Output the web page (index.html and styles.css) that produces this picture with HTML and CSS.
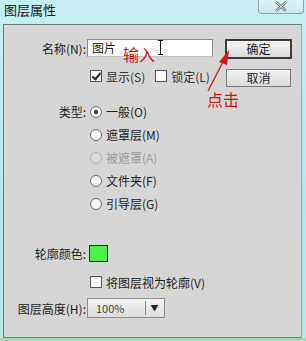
FILE: index.html
```html
<!DOCTYPE html>
<html>
<head>
<meta charset="utf-8">
<title>图层属性</title>
<link rel="stylesheet" href="styles.css">
</head>
<body>
<div class="window">
	<!--title bar-->
	<div class="titlebar">
		<span class="title">图层属性</span>
		<span class="close">
			<svg width="14" height="11" viewBox="0 0 14 11"><path d="M2 1 L12 10 M12 1 L2 10" stroke="#6b7376" stroke-width="2.6" fill="none"/><path d="M2 1 L12 10 M12 1 L2 10" stroke="#f4f6f6" stroke-width="1" fill="none"/></svg>
		</span>
	</div>
	<!--content-->
	<div class="panel">
		<div class="main">
			<div class="row row-name">
				<label class="lbl">名称(N):</label>
				<div class="input">图片</div>
			</div>
			<div class="row row-checks">
				<span class="chk on"></span><span class="txt">显示(S)</span>
				<span class="chk lock"></span><span class="txt">锁定(L)</span>
			</div>
			<div class="row radio-row first">
				<label class="lbl">类型:</label>
				<span class="radio on"></span><span class="txt">一般(O)</span>
			</div>
			<div class="row radio-row"><span class="radio"></span><span class="txt">遮罩层(M)</span></div>
			<div class="row radio-row off"><span class="radio"></span><span class="txt">被遮罩(A)</span></div>
			<div class="row radio-row"><span class="radio"></span><span class="txt">文件夹(F)</span></div>
			<div class="row radio-row"><span class="radio"></span><span class="txt">引导层(G)</span></div>
			<div class="row row-color">
				<label class="lbl">轮廓颜色:</label>
				<span class="swatch"></span>
			</div>
			<div class="row row-outline">
				<span class="chk"></span><span class="txt">将图层视为轮廓(V)</span>
			</div>
			<div class="row row-height">
				<label class="lbl">图层高度(H):</label>
				<div class="select"><span class="val">100%</span><span class="arr">&#9660;</span></div>
			</div>
		</div>
		<div class="side">
			<div class="btn ok">确定</div>
			<div class="btn cancel">取消</div>
		</div>
	</div>
	<!--annotations-->
	<span class="note note-input">输入</span>
	<span class="note note-click">点击</span>
	<span class="ibeam"></span>
	<svg class="arrow" width="40" height="50" viewBox="0 0 40 50"><path d="M6 43 L22 12" stroke="#d01818" stroke-width="1.3" fill="none"/><path d="M27 2 L17 14 L25 17 Z" fill="#d01818"/></svg>
</div>
</body>
</html>
```

FILE: styles.css
```css
*{margin:0;padding:0;box-sizing:border-box;}
body{width:306px;height:341px;overflow:hidden;background:#bfe9ec;}
/*window*/
.window{position:relative;width:306px;height:341px;background:linear-gradient(#c6eef1,#b7e6ea 60%,#b9e7e4);border-bottom:3px solid #9fdcb4;font:12px "Noto Sans CJK SC","Noto Sans",sans-serif;color:#222;}
.titlebar{height:24px;display:flex;justify-content:space-between;align-items:flex-start;}
.title{font-size:13px;line-height:20px;padding-left:4px;color:#1a1a1a;}
.close{width:46px;height:16px;margin:-2px 2px 0 0;border:1px solid #8ea4a8;border-top:0;border-radius:0 0 4px 4px;background:linear-gradient(#e2f4f6,#cbe9ed);display:flex;align-items:center;justify-content:center;padding-top:2px;}
.panel{display:flex;margin:0 4px 0 3px;height:314px;background:#d6d6d6;border:1px solid #6b7a7c;border-right-color:#9aa;}
/*left column*/
.main{flex:1;}
.row{display:flex;align-items:center;}
.lbl{width:82px;text-align:right;color:#1e1e1e;}
.txt{margin-left:4px;color:#222;}
.row-name{height:18px;margin-top:14px;}
.input{width:126px;height:18px;margin-left:1px;background:#fff;border:1px solid #8a8a8a;border-bottom-color:#c4c4c4;padding-left:4px;line-height:16px;}
.row-checks{height:14px;margin-top:12px;padding-left:86px;}
.row-checks .txt{color:#333;}
.chk{width:12px;height:12px;border:1px solid #555;background:#fbfbfb;position:relative;display:inline-block;}
.chk.on::after{content:"";position:absolute;left:3px;top:0;width:3px;height:7px;border:solid #222;border-width:0 2px 2px 0;transform:rotate(40deg);}
.chk.lock{margin-left:10px;}
.radio-row{height:23px;padding-left:86px;}
.radio-row.first{margin-top:17px;padding-left:0;}
.radio-row.first .radio{margin-left:4px;}
.radio{width:12px;height:12px;border:1px solid #6a6a6a;border-radius:50%;background:#f4f4f4;position:relative;display:inline-block;}
.radio.on::after{content:"";position:absolute;left:3px;top:3px;width:4px;height:4px;border-radius:50%;background:#222;}
.radio-row.off .radio{border-color:#b0b0b0;background:#dcdcdc;}
.radio-row.off .txt{color:#9a9a9a;}
.row-color{height:18px;margin-top:29px;}
.swatch{width:19px;height:17px;margin-left:3px;background:#4cf04a;border:1px solid #2a2a2a;}
.row-outline{height:16px;margin-top:12px;padding-left:86px;}
.row-height{height:20px;margin-top:8px;}
.select{width:78px;height:20px;margin-left:1px;display:flex;align-items:center;background:linear-gradient(#f3f3f3,#dedede);border:1px solid #8d8d8d;}
.val{flex:1;padding-left:8px;color:#444;font-size:11px;}
.arr{width:18px;height:14px;border-left:1px solid #888;font-size:8px;line-height:14px;text-align:center;color:#222;margin-right:1px;}
/*buttons*/
.side{width:75px;padding-top:14px;}
.btn{height:20px;line-height:16px;text-align:center;background:linear-gradient(#f5f5f5,#dadada);color:#1e1e1e;}
.ok{width:67px;margin-left:-1px;border:2px solid #3b3b3b;}
.cancel{width:65px;height:18px;margin-top:10px;border:1px solid #7a7a7a;line-height:16px;}
/*annotations*/
.note{position:absolute;color:#c81414;font-size:16px;line-height:16px;}
.note-input{left:123px;top:46px;}
.note-click{left:207px;top:91px;}
.ibeam{position:absolute;left:158px;top:40px;width:5px;height:15px;border-top:1px solid #111;border-bottom:1px solid #111;}
.ibeam::after{content:"";position:absolute;left:2px;top:0;width:1px;height:13px;background:#111;}
.arrow{position:absolute;left:202px;top:48px;}
```
